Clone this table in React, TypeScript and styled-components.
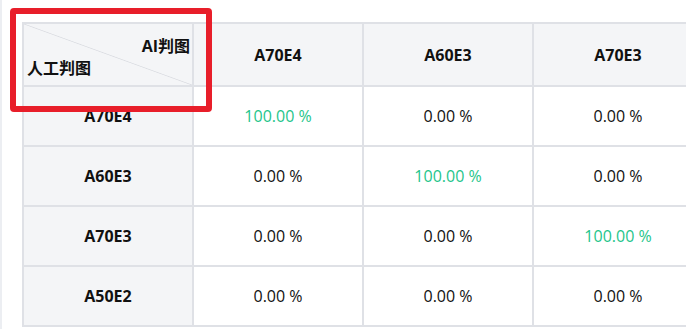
import styled, { createGlobalStyle } from "styled-components";

const GlobalStyle = createGlobalStyle`
  html, body {
    margin: 0;
    padding: 0;
    background: #ffffff;
    overflow: hidden;
  }
  body {
    font-family: "Open Sans", "Noto Sans", "Noto Sans CJK SC", sans-serif;
    color: #111111;
  }
`;

const Page = styled.div`
  position: relative;
  width: 686px;
  height: 329px;
  box-sizing: border-box;
  border-left: 2px solid #eceef2;
  padding: 22px 0 0 20px;
  overflow: hidden;
`;

const Matrix = styled.table`
  border-collapse: separate;
  border-spacing: 2px;
  background: #dfe1e6;
  table-layout: fixed;
  width: 682px;
  min-width: 682px;
`;

const HeadCell = styled.th`
  width: 168px;
  height: 61px;
  padding: 0;
  background: #f4f5f7;
  font-size: 16px;
  font-weight: 700;
  text-align: center;
  vertical-align: middle;
`;

const CornerCell = styled(HeadCell)`
  background: linear-gradient(
    to top right,
    #f4f5f7 calc(50% - 0.8px),
    #dcdee3 50%,
    #f4f5f7 calc(50% + 0.8px)
  );
`;

const CornerBox = styled.div`
  display: flex;
  flex-direction: column;
  justify-content: space-between;
  height: 61px;
  box-sizing: border-box;
  padding: 12px 2px 7px 3px;
`;

const CornerLabel = styled.span<{ $side: "left" | "right" }>`
  align-self: ${(p) => (p.$side === "right" ? "flex-end" : "flex-start")};
  font-size: 16px;
  font-weight: 700;
  line-height: 20px;
`;

const RowHead = styled.th`
  height: 58px;
  padding: 0;
  background: #f4f5f7;
  font-size: 16px;
  font-weight: 700;
  text-align: center;
`;

const ValueCell = styled.td<{ $hit: boolean }>`
  height: 58px;
  padding: 0;
  background: #ffffff;
  font-size: 16px;
  text-align: center;
  color: ${(p) => (p.$hit ? "#1ec58b" : "#111111")};
`;

const Marker = styled.div`
  position: absolute;
  left: 8px;
  top: 8px;
  width: 202px;
  height: 104px;
  box-sizing: border-box;
  border: 6px solid #e81e2a;
  border-radius: 4px;
  pointer-events: none;
`;

const labels = ["A70E4", "A60E3", "A70E3", "A50E2"];

function App() {
  return (
    <Page>
      <GlobalStyle />
      <Matrix>
        <thead>
          <tr>
            <CornerCell>
              <CornerBox>
                <CornerLabel $side="right">AI判图</CornerLabel>
                <CornerLabel $side="left">人工判图</CornerLabel>
              </CornerBox>
            </CornerCell>
            {labels.map((l) => (
              <HeadCell key={l}>{l}</HeadCell>
            ))}
          </tr>
        </thead>
        <tbody>
          {labels.map((row, i) => (
            <tr key={row}>
              <RowHead>{row}</RowHead>
              {labels.map((col, j) => (
                <ValueCell key={col} $hit={i === j}>
                  {i === j ? "100.00 %" : "0.00 %"}
                </ValueCell>
              ))}
            </tr>
          ))}
        </tbody>
      </Matrix>
      <Marker />
    </Page>
  );
}

export default App;
